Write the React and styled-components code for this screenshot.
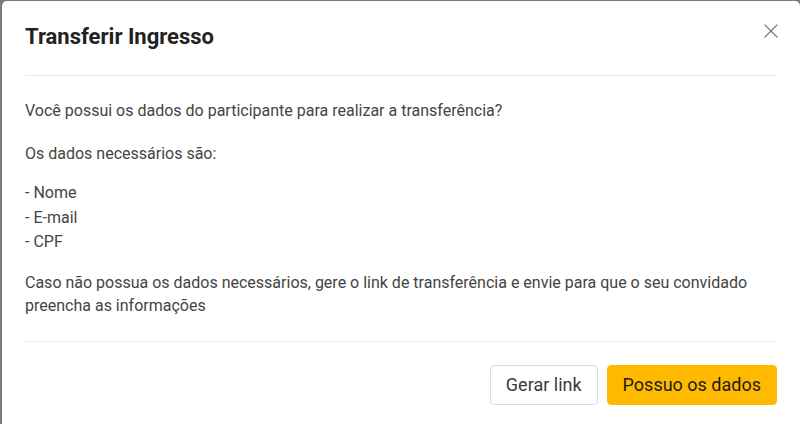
import React from "react";
import styled, { createGlobalStyle } from "styled-components";
import { X } from "lucide-react";

const GlobalStyle = createGlobalStyle`
  html, body {
    margin: 0;
    padding: 0;
    background: #7b7b7b;
    font-family: Roboto, "Liberation Sans", sans-serif;
  }
`;

const Modal = styled.div`
  box-sizing: border-box;
  margin: 1px 0 0 2px;
  width: 798px;
  height: 423px;
  background: #ffffff;
  border-radius: 5px 5px 0 0;
  display: flex;
  flex-direction: column;
  padding: 0 23px 0 23px;
`;

const Header = styled.div`
  display: flex;
  justify-content: space-between;
  align-items: flex-start;
  padding: 22px 0 24px;
  border-bottom: 1px solid #e9e9e9;
`;

const Title = styled.h2`
  margin: 0;
  font-size: 22px;
  line-height: 28px;
  font-weight: 700;
  color: #222222;
`;

const Close = styled.button`
  border: none;
  background: none;
  padding: 0;
  margin: -4px -6px 0 0;
  color: #7e7e7e;
  cursor: pointer;
  display: flex;
`;

const Body = styled.div`
  padding: 23px 0 24px;
  border-bottom: 1px solid #ececec;
  font-size: 16px;
  color: #444444;
`;

const Text = styled.p`
  margin: 0 0 ${(p) => p.$gap || 0}px;
  line-height: ${(p) => p.$lh || 24}px;
`;

const List = styled.ul`
  list-style: none;
  margin: 0 0 16px;
  padding: 0;
  line-height: 24.5px;
`;

const Footer = styled.div`
  display: flex;
  justify-content: flex-end;
  gap: 9px;
  padding-top: 23px;
`;

const Button = styled.button`
  height: 40px;
  padding: 0 15px;
  font-family: inherit;
  font-size: 18px;
  border-radius: 4px;
  cursor: pointer;
  color: ${(p) => (p.$primary ? "#1f1a10" : "#3a3a3a")};
  background: ${(p) => (p.$primary ? "#ffba00" : "#ffffff")};
  border: 1px solid ${(p) => (p.$primary ? "#ffba00" : "#dcdcdc")};
`;

export default function App() {
  return (
    <>
      <GlobalStyle />
      <Modal>
        <Header>
          <Title>Transferir Ingresso</Title>
          <Close aria-label="Fechar">
            <X size={24} strokeWidth={1.3} />
          </Close>
        </Header>
        <Body>
          <Text $gap={19}>
            Você possui os dados do participante para realizar a transferência?
          </Text>
          <Text $gap={15}>Os dados necessários são:</Text>
          <List>
            <li>- Nome</li>
            <li>- E-mail</li>
            <li>- CPF</li>
          </List>
          <Text $lh={23}>
            Caso não possua os dados necessários, gere o link de transferência e
            envie para que o seu convidado preencha as informações
          </Text>
        </Body>
        <Footer>
          <Button>Gerar link</Button>
          <Button $primary>Possuo os dados</Button>
        </Footer>
      </Modal>
    </>
  );
}
